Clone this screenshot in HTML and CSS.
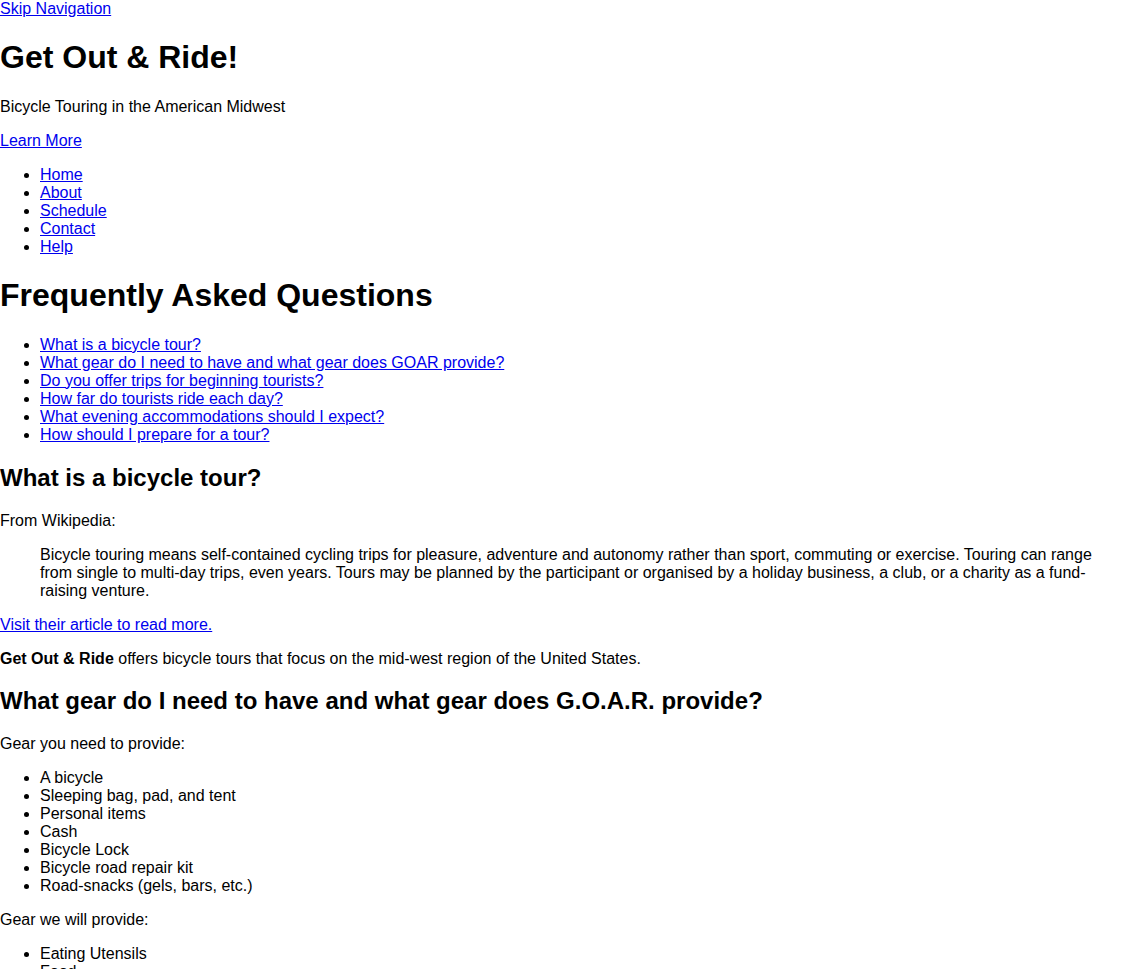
FILE: index.html
```html
<!DOCTYPE html>
<html lang="en">
<head>
  <meta charset="UTF-8">
  <title>Get Out &amp; Ride! - FAQ</title>
  <link rel="stylesheet" href="styles.css">
</head>
<body>
  <a href="#main" class="skip">Skip Navigation</a>
  <header class="site-header">
    <h1>Get Out &amp; Ride!</h1>
    <p>Bicycle Touring in the American Midwest</p>
    <p><a href="#">Learn More</a></p>
    <nav>
      <ul>
        <li><a href="#">Home</a></li>
        <li><a href="#">About</a></li>
        <li><a href="#">Schedule</a></li>
        <li><a href="#">Contact</a></li>
        <li><a href="#">Help</a></li>
      </ul>
    </nav>
  </header>
  <main id="main">
    <h1>Frequently Asked Questions</h1>
    <ul>
      <li><a href="#tour">What is a bicycle tour?</a></li>
      <li><a href="#gear">What gear do I need to have and what gear does GOAR provide?</a></li>
      <li><a href="#beginners">Do you offer trips for beginning tourists?</a></li>
      <li><a href="#distance">How far do tourists ride each day?</a></li>
      <li><a href="#evening">What evening accommodations should I expect?</a></li>
      <li><a href="#prepare">How should I prepare for a tour?</a></li>
    </ul>

    <h2 id="tour">What is a bicycle tour?</h2>
    <p>From Wikipedia:</p>
    <blockquote>Bicycle touring means self-contained cycling trips for pleasure, adventure and autonomy rather than sport, commuting or exercise. Touring can range from single to multi-day trips, even years. Tours may be planned by the participant or organised by a holiday business, a club, or a charity as a fund-raising venture.</blockquote>
    <p><a href="#">Visit their article to read more.</a></p>
    <p><strong>Get Out &amp; Ride</strong> offers bicycle tours that focus on the mid-west region of the United States.</p>

    <h2 id="gear">What gear do I need to have and what gear does G.O.A.R. provide?</h2>
    <p>Gear you need to provide:</p>
    <ul>
      <li>A bicycle</li>
      <li>Sleeping bag, pad, and tent</li>
      <li>Personal items</li>
      <li>Cash</li>
      <li>Bicycle Lock</li>
      <li>Bicycle road repair kit</li>
      <li>Road-snacks (gels, bars, etc.)</li>
    </ul>
    <p>Gear we will provide:</p>
    <ul>
      <li>Eating Utensils</li>
      <li>Food</li>
      <li>Water</li>
      <li>First aid</li>
    </ul>
  </main>
</body>
</html>
```

FILE: styles.css
```css
body{
  margin:0;
  font-family:"Liberation Sans", Arial, sans-serif;
}
```
